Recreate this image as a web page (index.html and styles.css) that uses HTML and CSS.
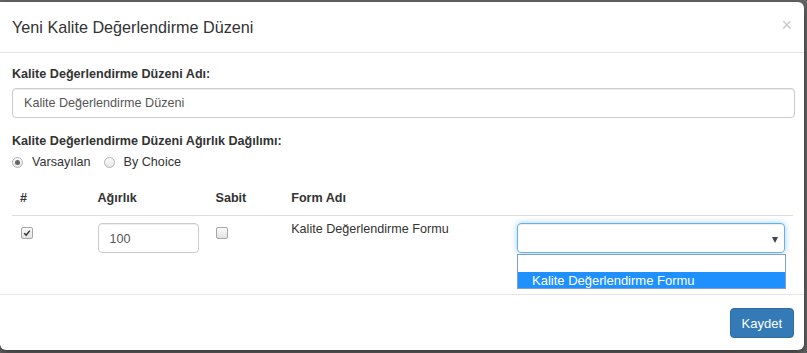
FILE: index.html
```html
<!DOCTYPE html>
<html lang="tr">
<head>
<meta charset="utf-8">
<title>Yeni Kalite Değerlendirme Düzeni</title>
<link rel="stylesheet" href="styles.css">
</head>
<body>
<div class="modal">
  <div class="modal-header">
    <h4 class="modal-title">Yeni Kalite Değerlendirme Düzeni</h4>
    <span class="close">×</span>
  </div>
  <div class="modal-body">
    <label class="field-label">Kalite Değerlendirme Düzeni Adı:</label>
    <div class="text-input wide">Kalite Değerlendirme Düzeni</div>
    <label class="field-label second">Kalite Değerlendirme Düzeni Ağırlık Dağılımı:</label>
    <div class="radios">
      <span class="radio checked"></span><span class="radio-text">Varsayılan</span>
      <span class="radio"></span><span class="radio-text">By Choice</span>
    </div>
    <table class="grid">
      <thead>
        <tr>
          <th class="c1">#</th>
          <th class="c2">Ağırlık</th>
          <th class="c3">Sabit</th>
          <th class="c4">Form Adı</th>
          <th class="c5"></th>
        </tr>
      </thead>
      <tbody>
        <tr>
          <td><span class="check checked"><svg viewBox="0 0 10 10" width="8" height="8"><path d="M1.5 5.2 L4 7.6 L8.6 2" fill="none" stroke="#333" stroke-width="1.8"/></svg></span></td>
          <td><div class="text-input weight">100</div></td>
          <td><span class="check"></span></td>
          <td class="form-name">Kalite Değerlendirme Formu</td>
          <td>
            <div class="select-wrap">
              <div class="select"><span class="caret"></span></div>
              <div class="dropdown">
                <div class="opt empty"></div>
                <div class="opt active">Kalite Değerlendirme Formu</div>
              </div>
            </div>
          </td>
        </tr>
      </tbody>
    </table>
  </div>
  <div class="modal-footer">
    <button class="btn">Kaydet</button>
  </div>
</div>
</body>
</html>
```
FILE: styles.css
```css
html, body {
  margin: 0;
  padding: 0;
}
body {
  background: #666;
  padding-top: 2px;
  height: 353px;
  box-sizing: border-box;
  overflow: hidden;
  font-family: "Liberation Sans", Arial, sans-serif;
  font-size: 12.6px;
  line-height: 20px;
  color: #333;
}
.modal {
  width: 804px;
  height: 348px;
  background: #fff;
  border-radius: 0 6px 6px 6px;
  box-shadow: 0 3px 9px rgba(0,0,0,.5);
  display: flex;
  flex-direction: column;
  box-sizing: border-box;
}
.modal-header {
  position: relative;
  padding: 12px 12px;
  border-bottom: 1px solid #e5e5e5;
}
.modal-title {
  margin: 0;
  font-size: 16.2px;
  font-weight: normal;
  line-height: 26px;
}
.close {
  position: absolute;
  right: 12px;
  top: 10px;
  font-size: 18px;
  line-height: 26px;
  color: #c8c8c8;
}
.modal-body {
  flex: 1;
  padding: 11px 9px 0 12px;
  position: relative;
}
.field-label {
  display: block;
  font-weight: bold;
  margin-bottom: 4px;
}
.field-label.second {
  margin-top: 13px;
  margin-bottom: 1px;
}
.text-input {
  height: 30px;
  box-sizing: border-box;
  border: 1px solid #ccc;
  border-radius: 4px;
  padding: 4px 11px;
  color: #555;
  box-shadow: inset 0 1px 1px rgba(0,0,0,.075);
}
.radios {
  display: flex;
  align-items: center;
  height: 20px;
}
.radio {
  width: 11px;
  height: 11px;
  border: 1px solid #b4b4b4;
  border-radius: 50%;
  background: linear-gradient(#fcfcfc, #e6e6e6);
  box-sizing: border-box;
  position: relative;
  margin-right: 9px;
}
.radio.checked::after {
  content: "";
  position: absolute;
  left: 2px;
  top: 2px;
  width: 5px;
  height: 5px;
  border-radius: 50%;
  background: #666;
}
.radio-text {
  margin-right: 13px;
}
.grid {
  margin-top: 8px;
  width: calc(100% - 2px);
  border-collapse: collapse;
}
.grid th {
  text-align: left;
  padding: 8px 8px 7px;
  border-bottom: 1px solid #ddd;
  font-weight: bold;
}
.grid td {
  vertical-align: top;
  padding: 3px 8px 0;
}
.c1 { width: 62px; }
.c2 { width: 102px; }
.c3 { width: 60px; }
.c4 { width: 211px; }
.check {
  display: flex;
  align-items: center;
  justify-content: center;
  width: 10px;
  height: 10px;
  margin-top: 8px;
  border: 1px solid #a6a6a6;
  border-radius: 2px;
  background: linear-gradient(#fafafa, #e2e2e2);
}
.check.checked {
  margin-left: 1px;
}
.text-input.weight {
  width: 101px;
  margin-top: 4px;
  padding-top: 5px;
}
.form-name {
  padding-top: 4px;
}
.select-wrap {
  position: relative;
  margin-top: 4px;
}
.select {
  height: 30px;
  width: 268px;
  box-sizing: border-box;
  border: 1px solid #66afe9;
  border-radius: 4px;
  box-shadow: inset 0 1px 1px rgba(0,0,0,.075), 0 0 6px rgba(102,175,233,.6);
  position: relative;
}
.caret {
  position: absolute;
  right: 6px;
  top: 13px;
  width: 0;
  height: 0;
  border-left: 3px solid transparent;
  border-right: 3px solid transparent;
  border-top: 6px solid #444;
}
.dropdown {
  position: absolute;
  left: 0;
  top: 31px;
  width: 269px;
  box-sizing: border-box;
  border: 1px solid #7f9fd0;
  background: #fff;
  z-index: 2;
}
.opt {
  height: 17px;
  line-height: 17px;
  padding-left: 14px;
  font-size: 13px;
}
.opt.active {
  background: #1e90ff;
  color: #fff;
  height: 16px;
}
.modal-footer {
  border-top: 1px solid #e5e5e5;
  padding: 13px 10px 12px;
  display: flex;
  justify-content: flex-end;
}
.btn {
  height: 30px;
  padding: 0 11px;
  font-family: "Liberation Sans", Arial, sans-serif;
  font-size: 13px;
  color: #fff;
  background: #337ab7;
  border: 1px solid #2e6da4;
  border-radius: 4px;
}
```
